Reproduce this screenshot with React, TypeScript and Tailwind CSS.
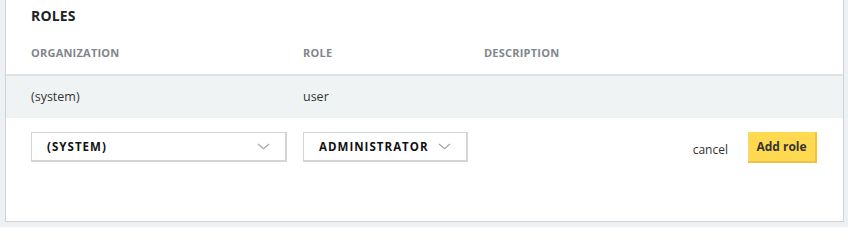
import React from 'react';

function Chevron() {
  return (
    <svg width="13" height="7" viewBox="0 0 13 7" fill="none" className="shrink-0">
      <path d="M1 1l5.5 4.8L12 1" stroke="#a3a8ab" strokeWidth="1.2" />
    </svg>
  );
}

function Select({ label, className }: { label: string; className: string }) {
  return (
    <div
      className={`flex h-[30px] items-center justify-between border border-[#d3d6d8] border-b-2 border-r-2 bg-white pl-[15px] pr-[15px] ${className}`}
    >
      <span className="text-[11.5px] font-bold tracking-[0.09em] text-[#111]">{label}</span>
      <Chevron />
    </div>
  );
}

export default function App() {
  return (
    <div
      className="h-[227px] w-[848px] overflow-hidden bg-[#eef1f3]"
      style={{ fontFamily: '"Open Sans", "Liberation Sans", sans-serif' }}
    >
      <div className="ml-[5px] flex h-[222px] w-[839px] flex-col border-x border-b border-[#cfd3d5] bg-white">
        <div className="pl-[25px] pt-[6px] text-[14px] font-bold leading-[20px] tracking-[0.01em] text-[#222]">ROLES</div>

        <div className="mt-[19px] flex h-[31px] items-start border-b-2 border-[#dfe2e4] pl-[25px] text-[11px] font-bold leading-[16px] tracking-[0.02em] text-[#80878c]">
          <div className="w-[272px]">ORGANIZATION</div>
          <div className="w-[181px]">ROLE</div>
          <div>DESCRIPTION</div>
        </div>

        <div className="flex h-[42px] items-center bg-[#f0f3f4] pl-[25px] text-[12.5px] text-[#333]">
          <div className="w-[272px]">(system)</div>
          <div className="w-[181px]">user</div>
        </div>

        <div className="mt-[14px] flex items-start pl-[25px] pr-[26px]">
          <Select label="(SYSTEM)" className="w-[256px]" />
          <Select label="ADMINISTRATOR" className="ml-[16px] w-[165px]" />
          <div className="flex-1" />
          <button className="mt-[9px] text-[12px] text-[#333]">cancel</button>
          <button className="ml-[20px] h-[31px] w-[69px] border-b-2 border-r-2 border-[#efc14a] bg-[#ffd94f] text-[12px] font-bold text-[#333]">
            Add role
          </button>
        </div>
      </div>
    </div>
  );
}
